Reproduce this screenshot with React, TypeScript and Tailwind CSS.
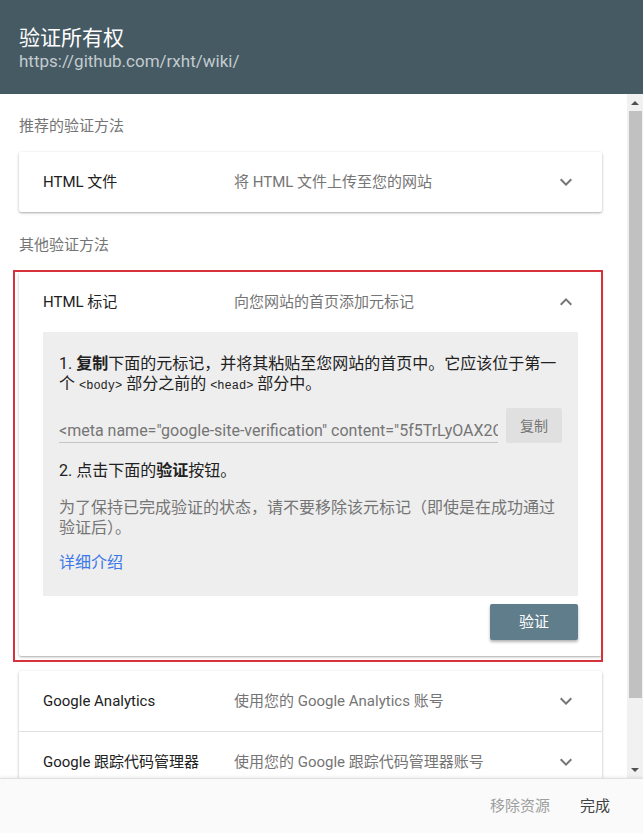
import React from 'react';

const FONT = { fontFamily: 'Roboto, "Noto Sans CJK SC", sans-serif' };

const Chevron: React.FC<{ up?: boolean }> = ({ up }) => (
  <svg width="24" height="24" viewBox="0 0 24 24" className="text-[#757575]">
    {up ? (
      <path d="M12 8l-6 6 1.41 1.41L12 10.83l4.59 4.58L18 14z" fill="currentColor" />
    ) : (
      <path d="M16.59 8.59L12 13.17 7.41 8.59 6 10l6 6 6-6z" fill="currentColor" />
    )}
  </svg>
);

const MethodHeader: React.FC<{ title: string; desc: string; open?: boolean }> = ({ title, desc, open }) => (
  <div className="flex items-center h-[60px] px-6 text-[15px]">
    <div className="w-[191px] shrink-0 text-[#212121]">{title}</div>
    <div className="flex-1 text-[#757575]">{desc}</div>
    <Chevron up={open} />
  </div>
);

const Code: React.FC<{ children: React.ReactNode }> = ({ children }) => (
  <code className="text-[12px] leading-none" style={{ fontFamily: '"Liberation Mono", monospace' }}>
    {children}
  </code>
);

const card = 'bg-white rounded-[2px] shadow-[0_1px_3px_rgba(0,0,0,0.28),0_1px_1px_rgba(0,0,0,0.08)]';

export default function App() {
  return (
    <div style={FONT} className="w-[643px] h-[833px] flex flex-col bg-white overflow-hidden">
      {/* header */}
      <div className="h-[94px] shrink-0 bg-[#465a64] px-[19px] pt-[25px]">
        <div className="text-[21px] leading-[26px] text-white">验证所有权</div>
        <div className="text-[17px] leading-[20px] text-[#c3cbcf]">https://github.com/rxht/wiki/</div>
      </div>

      {/* body */}
      <div className="flex-1 flex min-h-0">
        <div className="flex-1 overflow-hidden pl-[19px] pr-[25px] pt-[22px]">
          <div className="text-[15px] leading-[20px] text-[#757575]">推荐的验证方法</div>
          <div className={`${card} mt-4`}>
            <MethodHeader title="HTML 文件" desc="将 HTML 文件上传至您的网站" />
          </div>

          <div className="text-[15px] leading-[20px] text-[#757575] mt-[23px]">其他验证方法</div>

          <div className="relative mt-[17px]">
            <div className={card}>
              <MethodHeader title="HTML 标记" desc="向您网站的首页添加元标记" open />
              <div className="px-6 pb-4">
                <div className="bg-[#eeeeee] px-4 pt-[22px] pb-[23px] text-[16px] leading-[20px] text-[#212121]">
                  <div className="h-[40px]">
                    1. <b>复制</b>下面的元标记，并将其粘贴至您网站的首页中。它应该位于第一
                    <br />
                    个 <Code>&lt;body&gt;</Code> 部分之前的 <Code>&lt;head&gt;</Code> 部分中。
                  </div>
                  <div className="flex items-end gap-2 mt-[14px]">
                    <div className="flex-1 min-w-0 border-b border-[#c4c4c4] pb-[1px] text-[#757575] whitespace-nowrap overflow-hidden">
                      &lt;meta name="google-site-verification" content="5f5TrLyOAX2C
                    </div>
                    <button className="w-[56px] h-[35px] shrink-0 bg-[#e0e0e0] rounded-[2px] text-[14px] text-[#757575]">
                      复制
                    </button>
                  </div>
                  <div className="mt-[18px]">
                    2. 点击下面的<b>验证</b>按钮。
                  </div>
                  <div className="mt-[17px] text-[#757575]">
                    为了保持已完成验证的状态，请不要移除该元标记（即使是在成功通过
                    <br />
                    验证后）。
                  </div>
                  <div className="mt-[15px] text-[#3b78e7]">详细介绍</div>
                </div>
                <div className="flex justify-end mt-2">
                  <button className="w-[88px] h-[36px] bg-[#607d8b] rounded-[2px] text-white text-[15px] shadow-[0_2px_3px_rgba(0,0,0,0.3)]">
                    验证
                  </button>
                </div>
              </div>
            </div>
            <div className="absolute left-[-6px] right-[-1px] top-[-2px] bottom-[-6px] border-2 border-[#d5323c] pointer-events-none" />
          </div>

          <div className={`${card} mt-[15px]`}>
            <MethodHeader title="Google Analytics" desc="使用您的 Google Analytics 账号" />
            <div className="border-t border-[#e0e0e0]" />
            <MethodHeader title="Google 跟踪代码管理器" desc="使用您的 Google 跟踪代码管理器账号" />
          </div>
        </div>

        {/* scrollbar */}
        <div className="w-4 shrink-0 bg-[#f1f1f1] flex flex-col items-center">
          <div className="h-[17px] flex items-center justify-center">
            <div className="w-0 h-0 border-l-[4px] border-r-[4px] border-b-[4px] border-l-transparent border-r-transparent border-b-[#505050]" />
          </div>
          <div className="w-[13px] h-[587px] bg-[#c1c1c1]" />
          <div className="flex-1" />
          <div className="h-[17px] flex items-center justify-center">
            <div className="w-0 h-0 border-l-[4px] border-r-[4px] border-t-[4px] border-l-transparent border-r-transparent border-t-[#505050]" />
          </div>
        </div>
      </div>

      {/* footer */}
      <div className="h-[55px] shrink-0 bg-[#fafafa] border-t border-[#e0e0e0] shadow-[0_-1px_3px_rgba(0,0,0,0.08)] flex items-center justify-end gap-[30px] pr-[33px] text-[15px]">
        <span className="text-[#9e9e9e]">移除资源</span>
        <span className="text-[#424242]">完成</span>
      </div>
    </div>
  );
}
